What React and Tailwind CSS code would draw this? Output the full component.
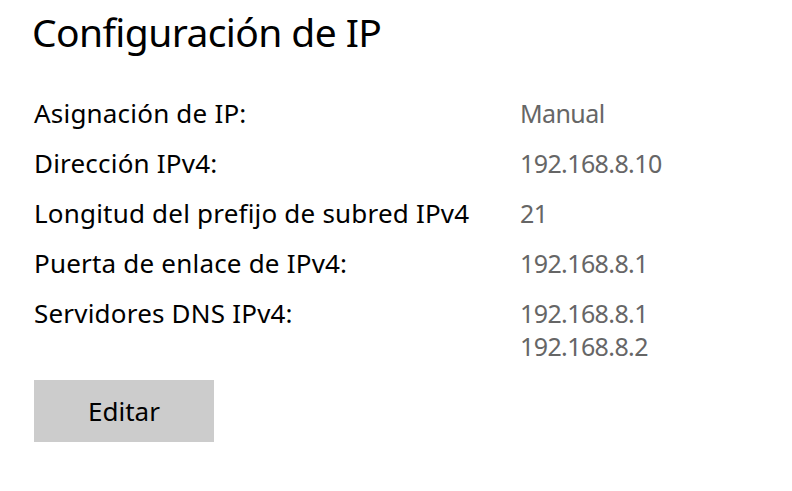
export default function App() {
  const rows = [
    ["Asignación de IP:", ["Manual"]],
    ["Dirección IPv4:", ["192.168.8.10"]],
    ["Longitud del prefijo de subred IPv4", ["21"]],
    ["Puerta de enlace de IPv4:", ["192.168.8.1"]],
    ["Servidores DNS IPv4:", ["192.168.8.1", "192.168.8.2"]],
  ];
  return (
    <div
      className="w-[792px] h-[491px] bg-white overflow-hidden pl-[34px] pt-[4px]"
      style={{ fontFamily: '"Noto Sans", "Open Sans", sans-serif' }}
    >
      <h1 className="text-[39px] leading-[56px] tracking-[-0.6px] text-black font-normal -ml-[2px]">
        Configuración de IP
      </h1>
      <div className="mt-[37px] flex flex-col gap-[17px] text-[26px] leading-[33px]">
        {rows.map(([label, values]) => (
          <div key={label} className="flex">
            <div className="w-[486px] text-black tracking-[0.2px]">{label}</div>
            <div className="flex flex-col text-[#666666] text-[25px] tracking-[-0.6px]">
              {values.map((v) => (
                <div key={v}>{v}</div>
              ))}
            </div>
          </div>
        ))}
        <button className="w-[180px] h-[62px] bg-[#cccccc] text-black text-[26px] flex items-center justify-center">
          Editar
        </button>
      </div>
    </div>
  );
}
